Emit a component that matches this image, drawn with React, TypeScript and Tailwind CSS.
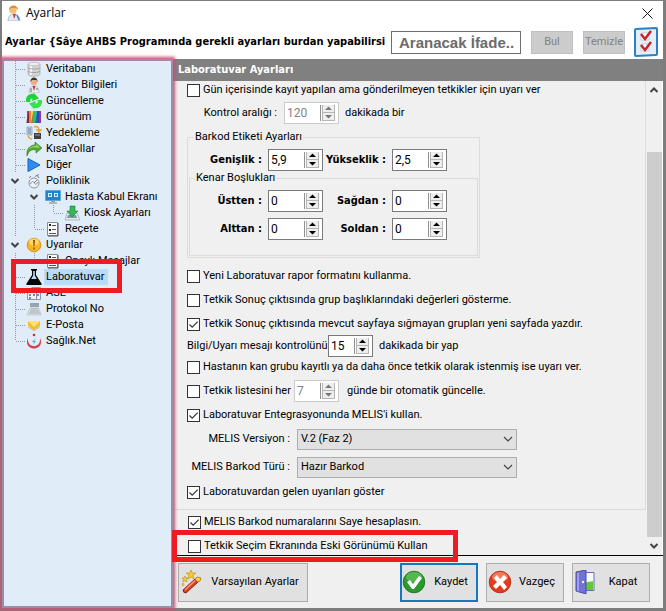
import type { ReactNode } from "react";

type TreeItem = {
  text: string;
  level: number;
  icon: ReactNode;
  open?: boolean;
  last?: boolean;
  selected?: boolean;
};

const boldFont = "font-['DejaVu_Sans_Condensed','DejaVu_Sans',sans-serif] font-bold";

const Icon = ({ children, size = "size-4" }: { children: ReactNode; size?: string }) => (
  <svg viewBox="0 0 16 16" className={`${size} shrink-0`} aria-hidden="true">
    {children}
  </svg>
);

const DocIcon = () => (
  <Icon>
    <path d="M2.500 1.500h10v13h-10z" fill="#fafafa" stroke="#8b8b8b" />
    <path d="M13 2v13M3 15h10" stroke="#555" />
    <path d="M4 3h2v2H4zM4 8h2v2H4z" fill="#222" />
    <path d="M7 4.500h4M7 8.500h4M4 12.500h7" stroke="#555" />
  </Icon>
);

const items: TreeItem[] = [
  {
    text: "Veritabanı",
    level: 0,
    icon: (
      <Icon>
        <path d="M2 3v10c0 3 12 3 12 0V3z" fill="#d2d4d6" stroke="#a5a8ab" strokeWidth=".7" />
        <path d="M4 4v10h2V4z" fill="#f6f6f6" />
        <path d="M2 6.500c0 2 12 2 12 0M2 10c0 2 12 2 12 0" fill="none" stroke="#909498" strokeWidth=".8" />
        <ellipse cx="8" cy="3" rx="6" ry="1.800" fill="#eceded" stroke="#a5a8ab" strokeWidth=".6" />
      </Icon>
    ),
  },
  {
    text: "Doktor Bilgileri",
    level: 0,
    icon: (
      <Icon>
        <path d="M3 16c0-5 2-7 5-7s5 2 5 7z" fill="#e9edf2" stroke="#a8adb6" strokeWidth=".6" />
        <path d="M6.500 9L8 14l1.500-5z" fill="#b63645" />
        <circle cx="8" cy="5" r="3.300" fill="#e9b387" />
        <path d="M4.500 5c-.5-6 7.500-6 7 0l-1-2H6z" fill="#44302a" />
        <path d="M5 11v4M11 11v2" stroke="#53617b" strokeWidth=".9" />
      </Icon>
    ),
  },
  {
    text: "Güncelleme",
    level: 0,
    icon: (
      <Icon>
        <path d="M0 9C-1 4 3 0 7 1l1-1 5 5.500L6 8l.5-2.500C4 5.500 4 7 4.500 9z" fill="#20d238" />
        <path d="M16 7c1 5-3 9-7 8l-1 1-5-5.500L10 8l-.5 2.500c2.500 0 2.500-1.500 2-3.500z" fill="#3be14d" />
      </Icon>
    ),
  },
  {
    text: "Görünüm",
    level: 0,
    icon: (
      <Icon>
        <path d="M1 2h3v12H1z" fill="#dc2b4b" />
        <path d="M3 2h3v12H3z" fill="#f0822c" />
        <path d="M5 2h2v12H5z" fill="#ffe83b" />
        <path d="M7 2h3v12H7z" fill="#2dbd67" />
        <path d="M9 2h2v12H9z" fill="#26b9e1" />
        <path d="M11 2h2v12h-2z" fill="#314ac4" />
        <path d="M13 2h2v12h-2z" fill="#9d3596" />
        <path d="M0 14L3 2v12zM5 14L7 3v11zM9 14l2-11v11z" fill="#252549" opacity=".5" />
      </Icon>
    ),
  },
  {
    text: "Yedekleme",
    level: 0,
    icon: (
      <Icon>
        <path d="M1 2h5v8H1z" fill="#cdd8e5" stroke="#8194ac" strokeWidth=".7" />
        <path d="M2 4h3M2 6h3M2 8h3" stroke="#6079a0" />
        <path d="M8 8h7v6H8z" fill="#3c4046" />
        <path d="M9 9h5v2H9z" fill="#69717b" />
        <path d="M8 2c3-1 5 0 5 3M13 7l-2-2h4zM6 14c-2 0-3-1-4-3" fill="none" stroke="#e9a339" strokeWidth="1.500" />
      </Icon>
    ),
  },
  {
    text: "KısaYollar",
    level: 0,
    icon: (
      <Icon>
        <path d="M1 15C0 8 4 4 9 4V1l7 6-6 5V9c-5-1-7 1-9 6z" fill="#51a832" stroke="#317922" strokeWidth=".6" />
        <path d="M3 8c2-3 5-3 7-3V3l4 4C9 6 6 6 3 8z" fill="#9ddb71" />
      </Icon>
    ),
  },
  {
    text: "Diğer",
    level: 0,
    icon: (
      <Icon>
        <path d="M2 1.500L14 8 2 14.500z" fill="#2d8cf0" stroke="#1c62bd" />
      </Icon>
    ),
  },
  {
    text: "Poliklinik",
    level: 0,
    open: true,
    icon: (
      <Icon>
        <circle cx="8" cy="10" r="5" fill="#eef2f6" stroke="#8b9299" />
        <path d="M4.500 11c1-3 3-3 4-1s2 2 3-1" stroke="#8b9299" fill="none" />
        <path d="M8 10l3-3M9 3.500l4-2M11 2l2 3M3 5l2-2" stroke="#767d84" fill="none" />
      </Icon>
    ),
  },
  {
    text: "Hasta Kabul Ekranı",
    level: 1,
    open: true,
    icon: (
      <Icon>
        <path d="M.5 1.500h15v10H.5z" fill="#2384c9" stroke="#5fa9da" />
        <path d="M3 4h4v4H3zM9 4h4v4H9z" fill="#d8efff" />
        <path d="M4 5h2v2H4zM10 5h2v2h-2z" fill="#348cc7" />
        <path d="M6 12h4v1H6z" fill="#94a1ab" />
        <path d="M4 13h8v2H4z" fill="#aab5bd" />
      </Icon>
    ),
  },
  {
    text: "Kiosk Ayarları",
    level: 2,
    last: true,
    icon: (
      <Icon>
        <path d="M3 8h10l3 7H1z" fill="#e5e9ed" stroke="#9aa5b0" strokeWidth=".7" />
        <path d="M4 10h8l1 3H3z" fill="#8297ae" />
        <path d="M6 1h5v5h3l-6 6-5-6h3z" fill="#37b557" stroke="#188539" strokeWidth=".6" />
      </Icon>
    ),
  },
  { text: "Reçete", level: 1, last: true, icon: <DocIcon /> },
  {
    text: "Uyarılar",
    level: 0,
    open: true,
    icon: (
      <Icon>
        <circle cx="8" cy="8" r="6.800" fill="#f9b51c" stroke="#df8d17" />
        <ellipse cx="8" cy="5" rx="5" ry="3.500" fill="#ffd968" />
        <path d="M7 3h2l-.4 6H7.400zM7.200 10.500h1.600v2H7.200z" fill="#8f5710" />
      </Icon>
    ),
  },
  { text: "Onaylı Mesajlar", level: 1, last: true, icon: <DocIcon /> },
  {
    text: "Laboratuvar",
    level: 0,
    selected: true,
    icon: (
      <Icon>
        <path d="M5 0h6v1.500h-1V6l5.500 8.500c.6 1-.1 1.500-1 1.500h-13c-.9 0-1.600-.5-1-1.500L6 6V1.500H5z" fill="#060606" />
        <path d="M7.200 2v4.500L5.200 10h5.600L8.800 6.500V2z" fill="#b9dcfa" />
      </Icon>
    ),
  },
  {
    text: "ASE",
    level: 0,
    icon: (
      <Icon>
        <path d="M1.500 6.500h9v8h-9zM5.500 2.500h9v12h-4" fill="#edf1f5" stroke="#8c96a3" />
        <path d="M3 9h2v2H3zM7 9h2v2H7zM3 12h2v2H3zM11 5h2v2h-2zM11 9h2v2h-2z" fill="#78879a" />
      </Icon>
    ),
  },
  {
    text: "Protokol No",
    level: 0,
    icon: (
      <Icon>
        <path d="M4 2h9v4H4z" fill="#98a4ad" />
        <path d="M4 7h9l2 7H1z" fill="#dfe3e5" stroke="#b6bec4" strokeWidth=".7" />
        <path d="M5 8h7M4 10h9M3 12h11" stroke="#a2acb3" />
      </Icon>
    ),
  },
  {
    text: "E-Posta",
    level: 0,
    icon: (
      <Icon>
        <path d="M2 4h12v5l-6 5-6-5z" fill="#f3bd39" />
        <path d="M2 4h12L8 10z" fill="#ffe376" />
        <path d="M2 10l6 4 6-4" fill="none" stroke="#c3cdd6" />
      </Icon>
    ),
  },
  {
    text: "Sağlık.Net",
    level: 0,
    last: true,
    icon: (
      <Icon>
        <path d="M2 5c-3 6 1 10.500 6 10.500S17 11 14 5c.5 5-2 8-6 8S1.500 10 2 5z" fill="#d84352" />
        <path d="M10 5l-4 4h2l-1 3 3-4H8z" fill="#49b4ad" />
        <circle cx="8" cy="2" r="1.300" fill="#c72e3d" />
      </Icon>
    ),
  },
];

const Chevron = ({ up = false }: { up?: boolean }) => (
  <svg viewBox="0 0 10 10" className="size-2.5" aria-hidden="true">
    <path d={up ? "M1.500 7L5 3.500 8.500 7" : "M1.500 3L5 6.500 8.500 3"} fill="none" stroke="#444" strokeWidth="2" />
  </svg>
);

// one 19px column of the dotted tree guides
const Guide = ({ vertical, half, branch }: { vertical: boolean; half?: boolean; branch?: boolean }) => (
  <svg viewBox="0 0 19 16" className="h-4 w-[19px] shrink-0" aria-hidden="true">
    {vertical && <path d={half ? "M8.500 0V8" : "M8.500 0V16"} stroke="#8c98a4" strokeDasharray="1 1" />}
    {branch && <path d="M9 8.500H19" stroke="#8c98a4" strokeDasharray="1 1" />}
  </svg>
);

const TreeRow = ({ item }: { item: TreeItem }) => (
  <li className="relative flex h-4 items-center pl-[3px]">
    {item.level > 0 && <Guide vertical />}
    {item.level > 1 && <Guide vertical />}
    {item.open ? (
      <button type="button" aria-label={`${item.text} daralt`} className="flex w-[19px] shrink-0 pl-[3px]">
        <Chevron />
      </button>
    ) : (
      <Guide vertical half={item.last} branch />
    )}
    {item.icon}
    <span className={`ml-0.5 px-0.5 leading-4 whitespace-nowrap ${item.selected ? "bg-[#b9dcfa] pr-1" : ""}`}>
      {item.text}
    </span>
    {item.selected && (
      <div className="pointer-events-none absolute -top-2.5 left-[7px] z-10 h-[34px] w-[111px] border-[5px] border-[#ed1c24]" />
    )}
  </li>
);

const Spin = ({ value, label, disabled, width = "w-[55px]" }: { value: string; label: string; disabled?: boolean; width?: string }) => (
  <span className={`flex h-[22px] ${width} items-center border bg-white pr-[3px] ${disabled ? "border-[#cccccc] text-[#838383]" : "border-[#7a7a7a]"}`}>
    <input type="text" aria-label={label} defaultValue={value} disabled={disabled} className="w-full min-w-0 flex-1 bg-transparent pl-0.5 text-xs leading-4 outline-none" />
    <svg viewBox="0 0 15 16" className="h-4 w-[15px] shrink-0" aria-hidden="true">
      <path d="M0.500 0V16" stroke="#909090" />
      <path d="M2 0h13v16H2z" fill="#eeeeee" />
      <path d="M2.500 0V16M14.500 0V16M2 7.500H15M2 15.500H15" stroke="#b5b5b5" />
      <path d="M5 5h7L8.500 1.500zM5 10h7l-3.500 3.500z" fill={disabled ? "#777" : "#000"} />
    </svg>
  </span>
);

const Check = ({ text, checked }: { text: string; checked?: boolean }) => (
  <label className="flex h-6 items-center gap-[3px] whitespace-nowrap">
    <span className="grid size-[13px] shrink-0">
      <input type="checkbox" defaultChecked={checked} className="peer col-start-1 row-start-1 size-[13px] appearance-none border border-[#333] bg-white" />
      <svg viewBox="0 0 13 13" className="pointer-events-none invisible col-start-1 row-start-1 size-[13px] peer-checked:visible" aria-hidden="true">
        <path d="M2.500 6.500l2.700 2.700L10.700 3.700" fill="none" stroke="#333" strokeWidth="1.200" />
      </svg>
    </span>
    {text}
  </label>
);

const Field = ({ text, value, labelWidth }: { text: string; value: string; labelWidth: string }) => (
  <div className="flex items-center">
    <span className={`${labelWidth} ${boldFont} text-right whitespace-nowrap`}>{text} :</span>
    <span className="ml-1.5">
      <Spin value={value} label={text} />
    </span>
  </div>
);

const Combo = ({ text, value }: { text: string; value: string }) => (
  <label className="flex h-7 items-center">
    <span className="w-[103px] text-right whitespace-nowrap">{text} :</span>
    <span className="ml-[7px] grid w-[220px] items-center">
      <select className="col-start-1 row-start-1 h-[21px] w-full appearance-none border border-[#adadad] bg-[#e1e1e1] pl-[3px] outline-none">
        <option>{value}</option>
      </select>
      <svg viewBox="0 0 10 10" className="pointer-events-none col-start-1 row-start-1 mr-1 size-2.5 justify-self-end" aria-hidden="true">
        <path d="M1 3l4 4 4-4" fill="none" stroke="#444" strokeWidth="1.200" />
      </svg>
    </span>
  </label>
);

const FootButton = ({ text, icon, primary, width = "w-[78px]" }: { text: string; icon: ReactNode; primary?: boolean; width?: string }) => (
  <button type="button" className={`flex h-[39px] ${width} items-center bg-[#e1e1e1] ${primary ? "border-2 border-[#1477c0]" : "border border-[#adadad] px-px"}`}>
    {icon}
    <span className="flex-1 text-center whitespace-nowrap">{text}</span>
  </button>
);

const WandIcon = () => (
  <svg viewBox="0 0 24 24" className="size-6 shrink-0" aria-hidden="true">
    <path d="M3 20L15 9l3 3L6 23q-3 0-3-3z" fill="#db3e22" stroke="#8c241b" />
    <path d="M5 20L15 10.500" stroke="#ff967b" strokeWidth="1.500" />
    <path d="M15 9l2-2 4 1-1 3-2 1z" fill="#ffd34a" stroke="#c38217" />
    <path d="M11 0l1.300 3H16l-3 2 1 4-3-2-3 2 1-4-3-2h3.700zM5 6l1 2h2L6.500 9.500 7 12l-2-1.500L3 12l.5-2.500L2 8h2zM3 13l1 1.500L3 16l-1-1.500z" fill="#f6c935" stroke="#b98d1c" strokeWidth=".6" />
  </svg>
);

const OkIcon = () => (
  <svg viewBox="0 0 24 24" className="size-6 shrink-0" aria-hidden="true">
    <circle cx="12" cy="12" r="10.800" fill="#2a9a2d" stroke="#176c1b" strokeWidth=".8" />
    <ellipse cx="12" cy="7" rx="8" ry="5" fill="#67c65b" opacity=".7" />
    <path d="M5 12l3-2 3 4 6-8 3 2-8 11h-2z" fill="#fff" />
  </svg>
);

const CancelIcon = () => (
  <svg viewBox="0 0 24 24" className="size-6 shrink-0" aria-hidden="true">
    <circle cx="12" cy="12" r="10.800" fill="#e23c1d" stroke="#a82310" strokeWidth=".8" />
    <ellipse cx="12" cy="7" rx="8" ry="5" fill="#f58a69" opacity=".8" />
    <path d="M6 8l3-3 3 4 4-4 3 3-4 4 4 5-3 3-4-5-4 4-3-3 4-4z" fill="#fff" />
  </svg>
);

const DoorIcon = () => (
  <svg viewBox="0 0 24 24" className="size-6 shrink-0" aria-hidden="true">
    <path d="M10 2.500h10v18H10z" fill="#f6faff" stroke="#6b6bb4" />
    <path d="M11 13c4-2 6-1 8-2v9h-8z" fill="#63c63b" />
    <path d="M2 2l10-2v24L2 21z" fill="#7171d6" stroke="#4a4aa8" />
    <path d="M3 3l2-.5v19L3 21z" fill="#9e9eed" />
    <circle cx="9" cy="12" r="1.200" fill="#f1f1ff" />
  </svg>
);

const App = () => {
  return (
    <div className="flex min-h-screen flex-col overflow-hidden bg-[#7d7d7d] pt-px font-['Roboto','Noto_Sans',sans-serif] text-[11px] leading-4 text-black">
      <div className="mr-[3px] ml-0.5 flex flex-1 flex-col bg-white">
        <header>
          <div className="flex h-6 items-center pr-2.5 pl-1">
            <svg viewBox="0 0 16 16" className="size-4" aria-hidden="true">
              <path d="M2 16c0-5 3-7 6-7s6 2 6 7z" fill="#e3eaf4" stroke="#8c9bb4" strokeWidth=".6" />
              <path d="M7 9l1 5 2-5z" fill="#bd3940" />
              <path d="M11 10l2 5" stroke="#4e82c5" strokeWidth="1.500" />
              <circle cx="7" cy="5" r="3.800" fill="#f1bf7c" />
              <path d="M3 5c0-6 9-6 9 0L10 3H5z" fill="#d9912c" />
            </svg>
            <span className="ml-1 font-['Open_Sans','Noto_Sans',sans-serif] text-xs">Ayarlar</span>
            <button type="button" aria-label="Kapat" className="ml-auto">
              <svg viewBox="0 0 11 11" className="size-[11px]">
                <path d="M.5.5l10 10M10.500.5l-10 10" stroke="#111" />
              </svg>
            </button>
          </div>
          <div className="flex h-[34px] items-center pr-[5px] pl-[3px]">
            <h1 className={`${boldFont} min-w-0 flex-1 overflow-hidden whitespace-nowrap`}>
              Ayarlar {"{"}Sâye AHBS Programında gerekli ayarları burdan yapabilirsi
            </h1>
            <input
              type="text"
              aria-label="Aranacak ifade"
              placeholder="Aranacak İfade.."
              className="ml-1 h-[23px] w-[130px] border border-[#6e6e6e] pl-[7px] font-['Liberation_Sans',Arial,sans-serif] text-[15px] font-bold outline-none placeholder:text-[#6b6b6b]"
            />
            <button type="button" disabled className="ml-2.5 h-[23px] w-[42px] border border-[#bfbfbf] bg-[#cccccc] text-[#838383]">
              Bul
            </button>
            <button type="button" disabled className="ml-2.5 h-[23px] w-[42px] border border-[#bfbfbf] bg-[#cccccc] text-[#838383]">
              Temizle
            </button>
            <svg viewBox="0 0 24 30" className="ml-[9px] h-[30px] w-6 shrink-0" aria-hidden="true">
              <path d="M2 2l20-1q1 0 1 1v25q0 1-1 1L2 29q-1 0-1-1V3q0-1 1-1z" fill="#e3eef8" stroke="#2b7fc4" strokeWidth="2" />
              <path d="M7 6h8v7H7zM7 17h8v7H7z" fill="#fff" stroke="#c9ccd0" />
              <path d="M7 7l4 5 6-8M7 18l4 5 6-8" fill="none" stroke="#c4242b" strokeWidth="2.500" />
            </svg>
          </div>
        </header>

        <div className="flex flex-1">
          <nav aria-label="Ayarlar" className="relative w-[171px] shrink-0 border-2 border-[#9c8bab] bg-[#e0ecf8] shadow-[0_0_3px_2px_#c95472]">
            <ul>
              {items.map((item) => (
                <TreeRow key={item.text} item={item} />
              ))}
            </ul>
          </nav>

          <main className="flex min-w-0 flex-1 flex-col bg-[#f0f0f0]">
            <h2 className={`${boldFont} h-[22px] bg-[#808080] pl-[5px] leading-[22px] text-white`}>Laboratuvar Ayarları</h2>

            <div className="flex flex-1 border-b border-black">
              <div className="flex min-w-0 flex-1 flex-col">
                <div className="border-r border-b border-[#dcdcdc] pb-[5px] pl-3.5">
                  <div className="-mt-[3px]">
                    <Check text="Gün içerisinde kayıt yapılan ama gönderilmeyen tetkikler için uyarı ver" />
                  </div>
                  <div className="flex items-center">
                    <span className="w-[90px] text-right">Kontrol aralığı :</span>
                    <span className="mr-1.5 ml-[7px]">
                      <Spin value="120" label="Kontrol aralığı" disabled />
                    </span>
                    dakikada bir
                  </div>

                  <fieldset className="mt-[5px] w-[293px] border border-[#dcdcdc] px-px pb-px">
                    <legend className="ml-[5px] h-4 px-px">Barkod Etiketi Ayarları</legend>
                    <div className="mt-1 flex">
                      <Field text="Genişlik" value="5,9" labelWidth="w-[73px]" />
                      <Field text="Yükseklik" value="2,5" labelWidth="w-[63px]" />
                    </div>
                    <fieldset className="-mt-px border border-[#dcdcdc] pb-[15px]">
                      <legend className="ml-[5px] h-4 px-px">Kenar Boşlukları</legend>
                      <div className="mt-1 flex">
                        <Field text="Üstten" value="0" labelWidth="w-[72px]" />
                        <Field text="Sağdan" value="0" labelWidth="w-[63px]" />
                      </div>
                      <div className="mt-1.5 flex">
                        <Field text="Alttan" value="0" labelWidth="w-[72px]" />
                        <Field text="Soldan" value="0" labelWidth="w-[63px]" />
                      </div>
                    </fieldset>
                  </fieldset>

                  <div className="mt-1.5">
                    <Check text="Yeni Laboratuvar rapor formatını kullanma." />
                    <Check text="Tetkik Sonuç çıktısında grup başlıklarındaki değerleri gösterme." />
                    <Check text="Tetkik Sonuç çıktısında mevcut sayfaya sığmayan grupları yeni sayfada yazdır." checked />
                  </div>
                  <div className="flex h-[19px] items-center">
                    <span className="w-[141px] whitespace-nowrap">Bilgi/Uyarı mesajı kontrolünü</span>
                    <span className="mr-1.5">
                      <Spin value="15" label="Bilgi/Uyarı mesajı kontrolünü" width="w-[45px]" />
                    </span>
                    dakikada bir yap
                  </div>
                  <Check text="Hastanın kan grubu kayıtlı ya da daha önce tetkik olarak istenmiş ise uyarı ver." />
                  <div className="flex items-center">
                    <div className="w-[107px]">
                      <Check text="Tetkik listesini her" />
                    </div>
                    <span className="mr-2">
                      <Spin value="7" label="Tetkik listesini her" disabled width="w-[45px]" />
                    </span>
                    günde bir otomatik güncelle.
                  </div>
                  <Check text="Laboratuvar Entegrasyonunda MELIS'i kullan." checked />
                  <div className="-mt-0.5 -mb-px">
                    <Combo text="MELIS Versiyon" value="V.2 (Faz 2)" />
                    <Combo text="MELIS Barkod Türü" value="Hazır Barkod" />
                  </div>
                  <Check text="Laboratuvardan gelen uyarıları göster" checked />
                </div>
                <div className="relative -mb-[3px] pl-[15px]">
                  <Check text="MELIS Barkod numaralarını Saye hesaplasın." checked />
                  <Check text="Tetkik Seçim Ekranında Eski Görünümü Kullan" />
                  <div className="pointer-events-none absolute top-5 -left-px z-10 h-8 w-[286px] border-[5px] border-[#ed1c24]" />
                </div>
              </div>
              <div className="flex w-[17px] shrink-0 flex-col items-center border-r border-white">
                <div className="grid h-[18px] place-items-center">
                  <Chevron up />
                </div>
                <div className="mt-[53px] w-[15px] flex-1 bg-[#cdcdcd]" />
                <div className="grid h-[18px] place-items-center">
                  <Chevron />
                </div>
              </div>
            </div>

            <footer className="flex h-[52px] items-center gap-2 pr-[13px] pl-[5px]">
              <FootButton text="Varsayılan Ayarlar" icon={<WandIcon />} width="w-[130px]" />
              <div className="flex-1" />
              <FootButton text="Kaydet" icon={<OkIcon />} primary />
              <FootButton text="Vazgeç" icon={<CancelIcon />} />
              <FootButton text="Kapat" icon={<DoorIcon />} />
            </footer>
          </main>
        </div>
      </div>
      <div className="h-[3px]" />
    </div>
  );
};

export default App;
